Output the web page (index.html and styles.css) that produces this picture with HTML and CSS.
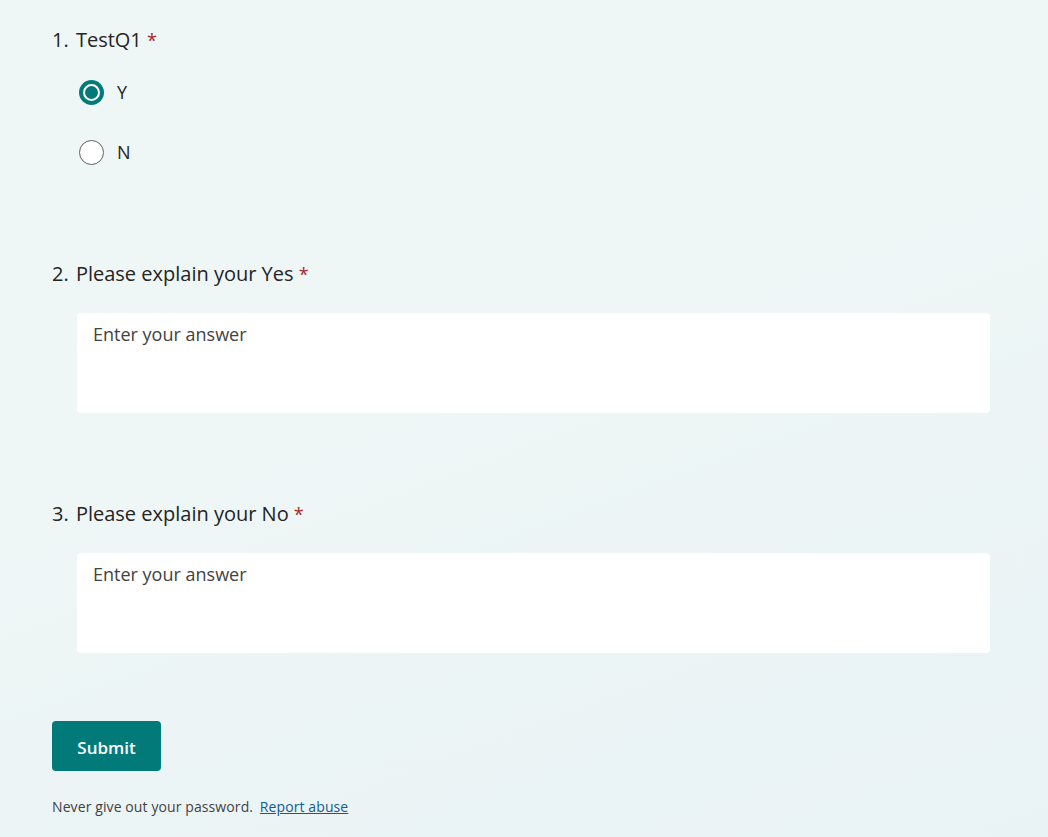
FILE: index.html
```html
<!DOCTYPE html>
<html>
	<head>
		<meta charset="utf-8" />
		<title>Form</title>
		<link rel="stylesheet" href="styles.css">
	</head>
	<body>
		<div class="page">
			<div class="question">
				<div class="title"><span class="num">1.</span> TestQ1 <span class="req">*</span></div>
				<div class="options">
					<label class="option">
						<span class="radio checked"><span class="dot"></span></span>
						<span class="label">Y</span>
					</label>
					<label class="option">
						<span class="radio"></span>
						<span class="label">N</span>
					</label>
				</div>
			</div>
			<div class="question q-text">
				<div class="title"><span class="num">2.</span> Please explain your Yes <span class="req">*</span></div>
				<div class="answer">Enter your answer</div>
			</div>
			<div class="question q-text q-last">
				<div class="title"><span class="num">3.</span> Please explain your No <span class="req">*</span></div>
				<div class="answer">Enter your answer</div>
			</div>
			<button class="submit">Submit</button>
			<p class="footer">Never give out your password. <a href="#">Report abuse</a></p>
		</div>
	</body>
</html>
```

FILE: styles.css
```css
*{
	padding: 0px;
	margin: 0px;
	box-sizing: border-box;
}
html, body{
	height: 100%;
}
body{
	font-family: "Open Sans", "Noto Sans", sans-serif;
	color: #242424;
	background: linear-gradient(160deg, #eef6f6 0%, #eef6f6 45%, #e9f2f5 100%);
	overflow: hidden;
}
.page{
	width: 990px;
	padding: 26px 0 0 52px;
}
.title{
	font-size: 20px;
	line-height: 28px;
	height: 28px;
	color: #242424;
}
.num{
	margin-right: 2px;
}
.req{
	color: #a4262c;
	font-size: 18px;
}
.options{
	margin-top: 8px;
	padding-left: 27px;
}
.option{
	display: flex;
	align-items: center;
	height: 60px;
}
.radio{
	width: 25px;
	height: 25px;
	border-radius: 50%;
	border: 1px solid #616161;
	background: #fff;
	display: flex;
	align-items: center;
	justify-content: center;
}
.radio.checked{
	background: #037a7a;
	border: none;
}
.radio .dot{
	width: 17px;
	height: 17px;
	border-radius: 50%;
	border: 2px solid #fff;
	background: #037a7a;
}
.label{
	margin-left: 13px;
	font-size: 18px;
	color: #242424;
}
.q-text{
	margin-top: 78px;
}
.q-last{
	margin-top: 87px;
}
.answer{
	margin: 25px 0 0 25px;
	height: 100px;
	background: #fff;
	border-radius: 4px;
	padding: 8px 16px;
	font-size: 18px;
	line-height: 26px;
	color: #424242;
}
.submit{
	margin-top: 68px;
	width: 109px;
	height: 50px;
	border: none;
	border-radius: 4px;
	background: #037a7a;
	color: #fff;
	font-family: "Open Sans", "Noto Sans", sans-serif;
	font-size: 17px;
	font-weight: 600;
	padding-top: 2px;
}
.footer{
	margin-top: 25px;
	font-size: 14px;
	line-height: 22px;
	color: #424242;
	letter-spacing: 0.1px;
}
.footer a{
	color: #0f5c8f;
	margin-left: 3px;
}
```
